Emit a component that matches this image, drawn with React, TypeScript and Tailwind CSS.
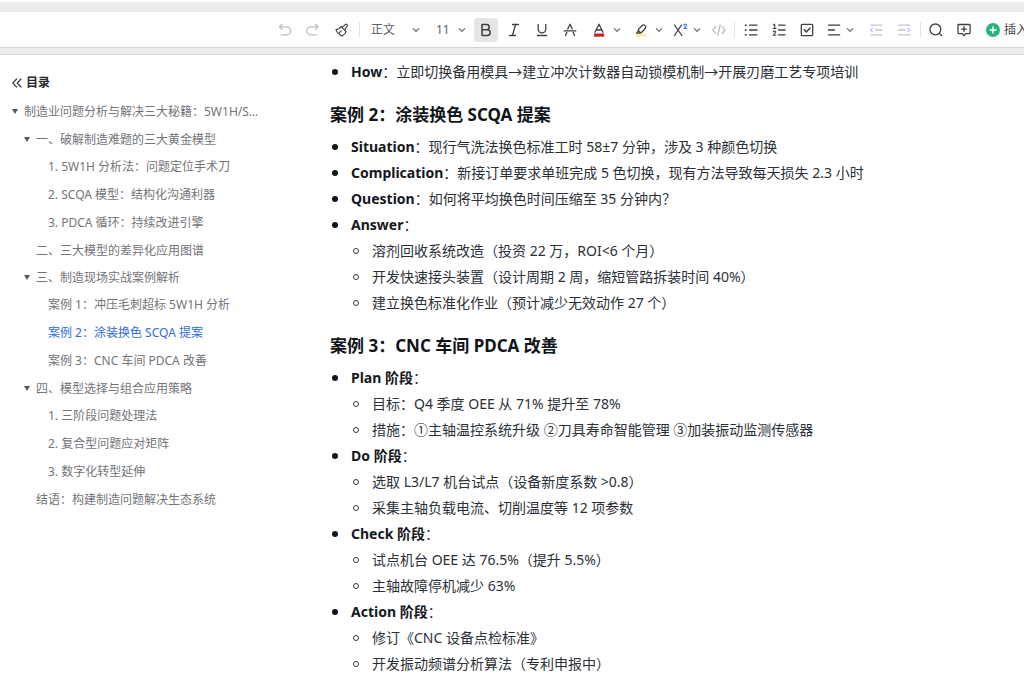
import type { ReactNode } from "react";

const FONT = "font-['Noto_Sans','Noto_Sans_CJK_SC',sans-serif]";

function Icon({ children }: { children: ReactNode }) {
  return (
    <svg
      width="24"
      height="24"
      viewBox="0 0 24 24"
      fill="none"
      stroke="currentColor"
      strokeWidth="1.3"
      strokeLinecap="round"
      strokeLinejoin="round"
      aria-hidden="true"
      className="shrink-0"
    >
      {children}
    </svg>
  );
}

function Chevron() {
  return (
    <svg width="8" height="8" viewBox="0 0 8 8" fill="none" stroke="#6b6d70" strokeWidth="1.2" strokeLinecap="round" strokeLinejoin="round" aria-hidden="true">
      <path d="M1.3 2.7 4 5.4l2.700-2.700" />
    </svg>
  );
}

function Tool({ label, children, className = "w-6 text-[#3d4043]", pressed }: { label: string; children: ReactNode; className?: string; pressed?: boolean }) {
  return (
    <button type="button" aria-label={label} aria-pressed={pressed} className={`flex h-6 shrink-0 items-center justify-center rounded ${className}`}>
      <Icon>{children}</Icon>
    </button>
  );
}

function More({ label }: { label: string }) {
  return (
    <button type="button" aria-label={label} className="flex h-6 w-3.5 shrink-0 items-center justify-center">
      <Chevron />
    </button>
  );
}

function Picker({ label, options, className }: { label: string; options: string[]; className: string }) {
  return (
    <div className="grid shrink-0 items-center text-xs text-[#5c5f63]">
      <select aria-label={label} className={`col-start-1 row-start-1 h-7 appearance-none bg-transparent leading-7 ${className}`}>
        {options.map((o) => (
          <option key={o}>{o}</option>
        ))}
      </select>
      <span className="pointer-events-none col-start-1 row-start-1 justify-self-end pr-1">
        <Chevron />
      </span>
    </div>
  );
}

function Divider({ className = "" }: { className?: string }) {
  return <div className={`h-4 w-px shrink-0 bg-[#e3e4e6] ${className}`} />;
}

function Toolbar() {
  return (
    <header className="border-t-2 border-white bg-[#ececec]">
      <div className="mt-2.5 flex h-9 items-center gap-1 overflow-hidden border-b border-[#d2d3d4] bg-white pl-[273px]">
        <Tool label="撤销" className="w-6 text-[#bcbdbf]">
          <path d="M9 6.200 6.400 8.800 9 11.400M6.600 8.800h7.200a3.900 3.900 0 0 1 0 8H8.200" />
        </Tool>
        <Tool label="重做" className="w-6 text-[#bcbdbf]">
          <path d="m14.500 6.200 2.600 2.600-2.600 2.600M16.900 8.800H9.700a3.900 3.900 0 0 0 0 8h5.600" />
        </Tool>
        <Tool label="格式刷">
          <g strokeWidth="1.2">
            <path d="M7 11.600c2.300-.2 3.900-1.100 5-3l5.100 5c-.6 2-2 3.400-4 4.300-2.700-.9-4.900-3.300-6.100-6.300Z" />
            <path d="M12.900 9.300c.5-1 1.300-.9 2-1.400l1.600-1.500c.9-.7 2.400.7 1.700 1.700L16.700 10c-.5.700-.3 1.500-1.200 2M10.300 14.800l1.900-1.900" />
          </g>
        </Tool>
        <Divider className="mx-0.5" />
        <Picker label="段落样式" options={["正文", "标题 1", "标题 2"]} className="w-[58px] pl-[5px]" />
        <Picker label="字号" options={["11", "12", "14"]} className="w-[42px] pl-2" />
        <Tool label="加粗" pressed className="w-6 bg-[#e5e5e6] text-[#3d4043]">
          <path strokeWidth="1.5" d="M8 6.500h4.600a2.600 2.600 0 0 1 0 5.200H8Zm0 5.200h5.300a2.900 2.900 0 0 1 0 5.800H8Z" />
        </Tool>
        <Tool label="斜体">
          <path d="M10.500 6.500h6M7.500 17.500h6M13.600 6.500l-3.200 11" />
        </Tool>
        <Tool label="下划线">
          <path d="M8.200 6.300v4.800a3.800 3.800 0 0 0 7.600 0V6.300M7.500 17.500h9" />
        </Tool>
        <Tool label="删除线">
          <path d="M9.700 11 12 6.300l2.300 4.700M6.200 12.900h11.600M8.800 14.500l-1.300 3M15.200 14.500l1.300 3" />
        </Tool>
        <div className="flex">
          <Tool label="字体颜色">
            <path d="M9 14.200 13 6.300l4 7.900M10.200 12h5.600" />
            <path d="M8 15.500h10.200v3.200H8z" fill="#c9211e" stroke="none" />
          </Tool>
          <More label="更多字体颜色" />
        </div>
        <div className="flex">
          <Tool label="突出显示">
            <path d="M7.500 15.500h10.700v3.200H7.500z" fill="#f7eda6" stroke="none" />
            <path d="m10.400 11.400 4-4.200c1.200-1.200 4.300 1.200 3.200 2.800l-3.800 4.200c-1.400.7-2.900.2-3.400-2.800ZM10.400 12.500l-1.700 2.600h3.500l1.300-.8" />
          </Tool>
          <More label="更多突出显示颜色" />
        </div>
        <div className="flex">
          <Tool label="上标" className="w-5 text-[#3d4043]">
            <path d="m6.500 7 7.300 10.500M13.500 7 6.500 17.500" />
            <path stroke="#4b7bec" strokeWidth="1.2" d="M15.800 7.400c.1-1.700 2.700-1.600 2.600 0 0 .9-1.200 1.600-2.500 3h2.700" />
          </Tool>
          <More label="更多上下标" />
        </div>
        <Tool label="代码" className="w-[22px] text-[#bcbdbf]">
          <path d="M8.700 8.700 6 12l2.700 3.300M15.300 8.700 18 12l-2.700 3.300M13.200 7l-2.400 10" />
        </Tool>
        <Divider />
        <Tool label="无序列表">
          <path d="M10.500 7.200h7.500M10.500 12h7.500M10.500 16.800h7.500" />
          <path strokeWidth="2" d="M6.700 7.200h.01M6.700 12h.01M6.700 16.800h.01" />
        </Tool>
        <Tool label="有序列表">
          <path d="M11.500 7.200h6.500M11.500 12h6.500M11.500 16.800h6.500" />
          <path strokeWidth="1.1" d="m6.400 6.900 1.300-.7v4.300M6.200 10.500h2.800M6.300 13.900c.3-1.100 2.500-1 2.300.3-.1.800-1.300 1.600-2.300 3.100h2.600" />
        </Tool>
        <Tool label="任务列表">
          <rect x="6.300" y="6.300" width="11.400" height="11.400" rx="1" />
          <path strokeWidth="1.5" d="m9.200 11.800 2.100 2.100 3.700-3.900" />
        </Tool>
        <div className="flex">
          <Tool label="对齐方式" className="w-5 text-[#3d4043]">
            <path d="M7.500 7.200h11.200M7.500 12h6M7.500 16.800h11.200" />
          </Tool>
          <More label="更多对齐方式" />
        </div>
        <Tool label="减少缩进" className="ml-[3px] w-6 text-[#c4c5c7]">
          <path d="M6.500 7.200h11.300M11.500 12h6.300M6.500 16.800h11.300" />
          <path stroke="#b8c8f5" d="m8.400 10.200-1.800 1.800 1.800 1.800" />
        </Tool>
        <Tool label="增加缩进" className="w-6 text-[#c4c5c7]">
          <path d="M6.500 7.200h11.300M6.500 12h6.300M6.500 16.800h11.300" />
          <path stroke="#b8c8f5" d="m16 10.200 1.800 1.800-1.800 1.800" />
        </Tool>
        <Divider />
        <Tool label="查找">
          <circle cx="10.400" cy="11.400" r="5.400" />
          <path d="m14.400 15.400 2.400 2.400" />
        </Tool>
        <Tool label="添加评论">
          <path d="M5.800 6.500h10.500a.8.8 0 0 1 .8.8v7.500a.8.8 0 0 1-.8.8h-3.600L11 17.700l-1.700-2.100H5.800a.8.8 0 0 1-.8-.8V7.300a.8.8 0 0 1 .8-.8ZM11 8.700v4.800M8.600 11.100h4.800" />
        </Tool>
        <button type="button" className="ml-[5px] flex h-6 shrink-0 items-center gap-1 text-xs text-[#45484c]">
          <svg width="14" height="14" viewBox="0 0 14 14" aria-hidden="true">
            <circle cx="7" cy="7" r="7" fill="#24b47e" />
            <path d="M7 4v6M4 7h6" stroke="#fff" strokeWidth="1.5" strokeLinecap="round" />
          </svg>
          插入
        </button>
      </div>
      <div className="h-[7px] border-b border-[#d8d9da]" />
    </header>
  );
}

type Node = { text: string; active?: boolean; children?: Node[] };

const outline: Node = {
  text: "制造业问题分析与解决三大秘籍：5W1H/SCQA/PDCA 实战指南",
  children: [
    {
      text: "一、破解制造难题的三大黄金模型",
      children: [{ text: "1. 5W1H 分析法：问题定位手术刀" }, { text: "2. SCQA 模型：结构化沟通利器" }, { text: "3. PDCA 循环：持续改进引擎" }],
    },
    { text: "二、三大模型的差异化应用图谱" },
    {
      text: "三、制造现场实战案例解析",
      children: [{ text: "案例 1：冲压毛刺超标 5W1H 分析" }, { text: "案例 2：涂装换色 SCQA 提案", active: true }, { text: "案例 3：CNC 车间 PDCA 改善" }],
    },
    {
      text: "四、模型选择与组合应用策略",
      children: [{ text: "1. 三阶段问题处理法" }, { text: "2. 复合型问题应对矩阵" }, { text: "3. 数字化转型延伸" }],
    },
    { text: "结语：构建制造问题解决生态系统" },
  ],
};

function OutlineItem({ node, level = 1 }: { node: Node; level?: number }) {
  return (
    <li>
      <div className={`flex items-center ${level === 2 ? "h-[27px]" : "h-7"}`}>
        <span className="flex w-3 shrink-0">
          {node.children && (
            <button type="button" aria-label="折叠" aria-expanded="true">
              <svg width="6" height="6" viewBox="0 0 6 6" fill="#55585c" aria-hidden="true">
                <path d="M0 0h6L3 5Z" />
              </svg>
            </button>
          )}
        </span>
        <a href="#" className={`truncate ${node.active ? "text-[#2f6be0]" : "text-[#727478]"}`}>
          {node.text}
        </a>
      </div>
      {node.children && (
        <ul className="pl-3">
          {node.children.map((c) => (
            <OutlineItem key={c.text} node={c} level={level + 1} />
          ))}
        </ul>
      )}
    </li>
  );
}

function Sidebar() {
  return (
    <nav aria-label="目录" className="w-[270px] shrink-0 pt-[18px] pr-2.5 pl-3 text-xs">
      <h2 className="flex h-5 items-center gap-1 font-bold text-[#26282b]">
        <button type="button" aria-label="收起目录">
          <svg width="10" height="10" viewBox="0 0 10 10" fill="none" stroke="#3d4043" strokeWidth="1.2" strokeLinecap="round" strokeLinejoin="round" aria-hidden="true">
            <path d="M4.600 1 .8 5l3.800 4M9 1 5.200 5 9 9" />
          </svg>
        </button>
        目录
      </h2>
      <ul className="mt-[5px]">
        <OutlineItem node={outline} />
      </ul>
    </nav>
  );
}

type Entry = { term: string; text?: string; items?: string[] };

function Entries({ entries }: { entries: Entry[] }) {
  return (
    <ul>
      {entries.map((e) => (
        <li key={e.term}>
          <div className="flex items-center">
            <span className="mr-[13px] ml-0.5 size-1.5 shrink-0 rounded-full bg-[#0f1419]" />
            <p>
              <strong className="font-bold text-[#14181d]">{e.term}</strong>：{e.text}
            </p>
          </div>
          {e.items && (
            <ul className="pl-[21px]">
              {e.items.map((t) => (
                <li key={t} className="flex items-center">
                  <span className="mr-[13px] ml-0.5 size-1.5 shrink-0 rounded-full border border-[#33383e]" />
                  {t}
                </li>
              ))}
            </ul>
          )}
        </li>
      ))}
    </ul>
  );
}

function Heading({ children }: { children: ReactNode }) {
  return <h3 className="mt-[17px] mb-[7px] text-[17px] leading-[25px] font-bold text-[#0f1419]">{children}</h3>;
}

export default function App() {
  return (
    <div className={`min-h-screen bg-white ${FONT}`}>
      <Toolbar />
      <div className="flex">
        <Sidebar />
        <main className="min-w-0 flex-1 pt-1 pl-[60px] text-sm leading-[26px] text-[#2b3037]">
          <Entries entries={[{ term: "How", text: "立即切换备用模具→建立冲次计数器自动锁模机制→开展刃磨工艺专项培训" }]} />
          <Heading>案例 2：涂装换色 SCQA 提案</Heading>
          <Entries
            entries={[
              { term: "Situation", text: "现行气洗法换色标准工时 58±7 分钟，涉及 3 种颜色切换" },
              { term: "Complication", text: "新接订单要求单班完成 5 色切换，现有方法导致每天损失 2.3 小时" },
              { term: "Question", text: "如何将平均换色时间压缩至 35 分钟内？" },
              {
                term: "Answer",
                items: ["溶剂回收系统改造（投资 22 万，ROI<6 个月）", "开发快速接头装置（设计周期 2 周，缩短管路拆装时间 40%）", "建立换色标准化作业（预计减少无效动作 27 个）"],
              },
            ]}
          />
          <Heading>案例 3：CNC 车间 PDCA 改善</Heading>
          <Entries
            entries={[
              { term: "Plan 阶段", items: ["目标：Q4 季度 OEE 从 71% 提升至 78%", "措施：①主轴温控系统升级 ②刀具寿命智能管理 ③加装振动监测传感器"] },
              { term: "Do 阶段", items: ["选取 L3/L7 机台试点（设备新度系数 >0.8）", "采集主轴负载电流、切削温度等 12 项参数"] },
              { term: "Check 阶段", items: ["试点机台 OEE 达 76.5%（提升 5.5%）", "主轴故障停机减少 63%"] },
              { term: "Action 阶段", items: ["修订《CNC 设备点检标准》", "开发振动频谱分析算法（专利申报中）"] },
            ]}
          />
        </main>
      </div>
    </div>
  );
}
